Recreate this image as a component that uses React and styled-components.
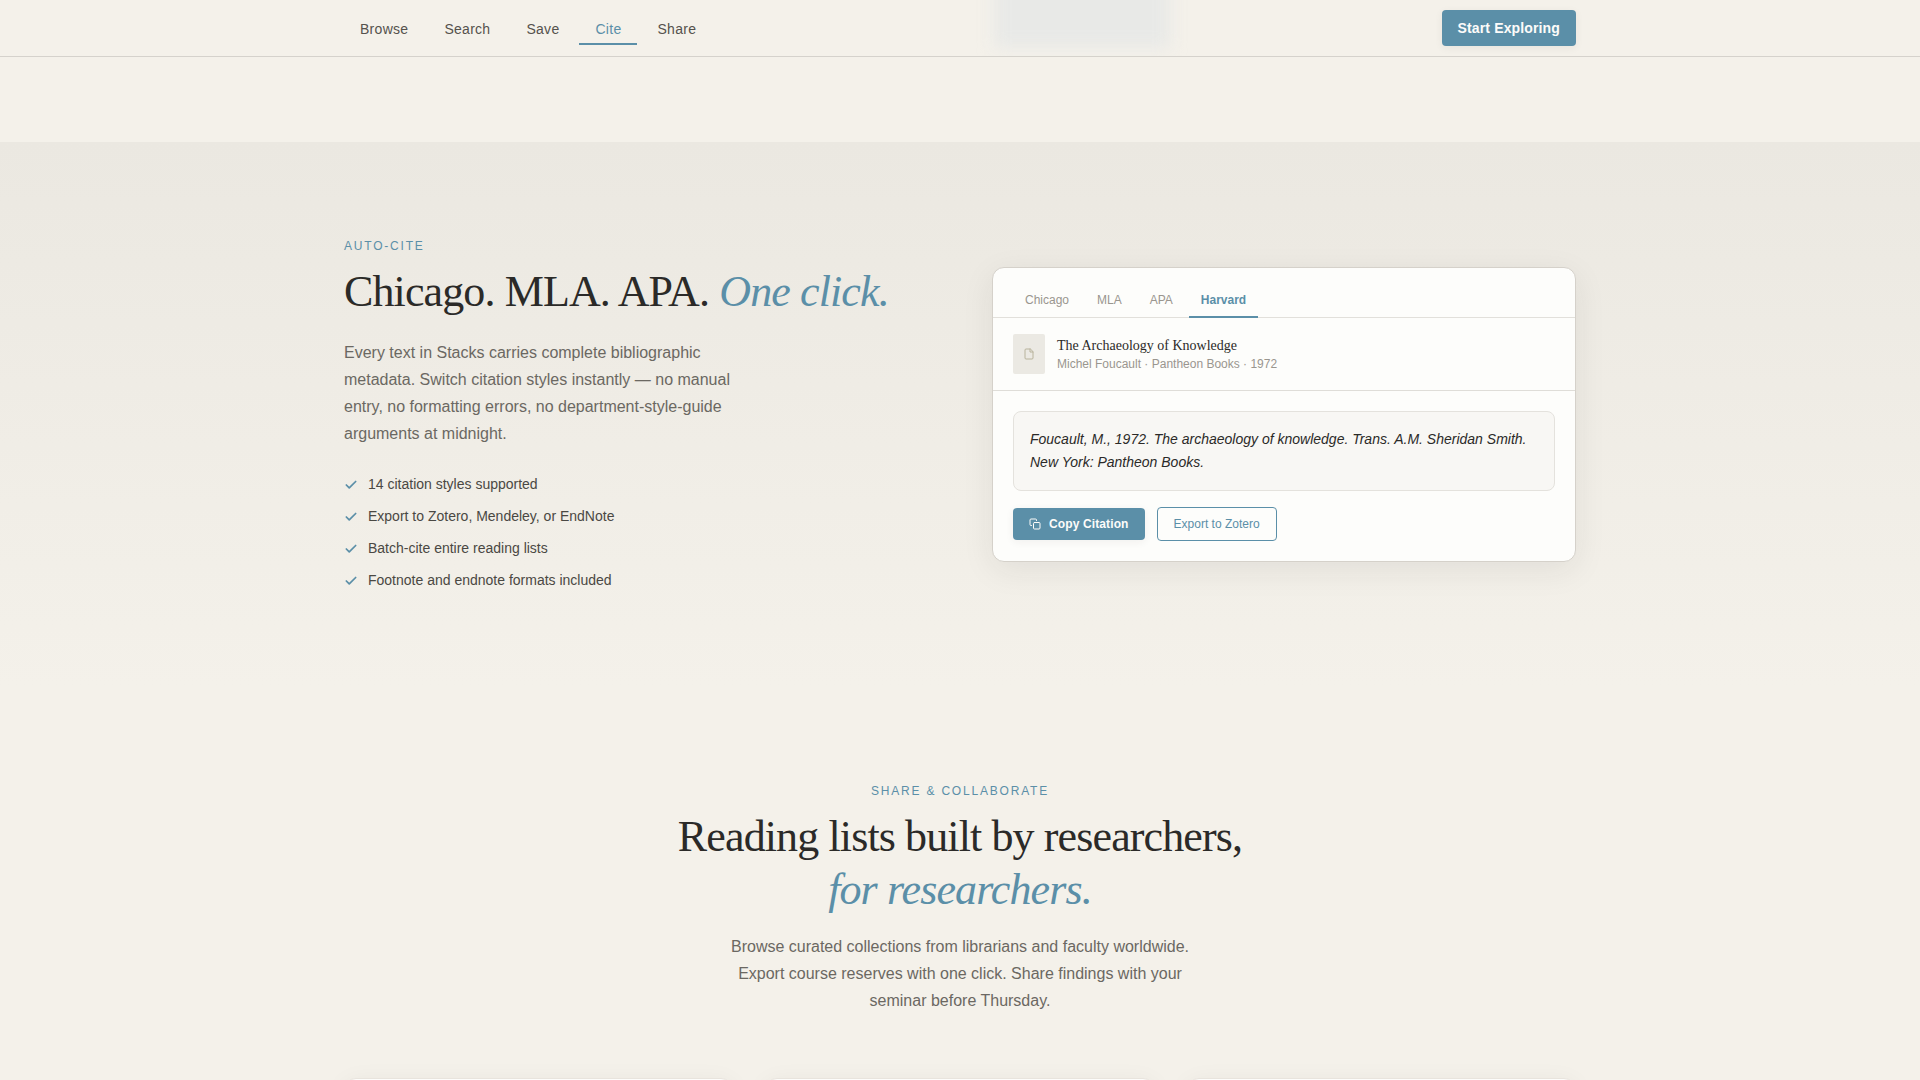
import React, { useState } from "react";
import styled, { createGlobalStyle } from "styled-components";

const sans = `"Liberation Sans", Arial, sans-serif`;
const serif = `"Liberation Serif", "Times New Roman", serif`;

const GlobalStyle = createGlobalStyle`
  *, *::before, *::after {
    box-sizing: border-box;
  }
  body {
    margin: 0;
    background: #f4f1ea;
    color: #2b2a28;
    font-family: ${sans};
  }
  h2, p, ul {
    margin: 0;
    padding: 0;
  }
  button {
    font-family: inherit;
    cursor: pointer;
  }
`;

const Container = styled.div`
  max-width: 1280px;
  margin: 0 auto;
  padding: 0 24px;
`;

const Header = styled.header`
  position: sticky;
  top: 0;
  z-index: 10;
  overflow: hidden;
  background: #f4f1ea;
  border-bottom: 1px solid #d5d2cc;
`;

/* blurred shape showing through the bar */
const HeaderGhost = styled.div`
  position: absolute;
  top: -40px;
  left: calc(50% + 34px);
  width: 176px;
  height: 88px;
  background: #e8e9e7;
  filter: blur(8px);
`;

const HeaderRow = styled(Container)`
  position: relative;
  display: flex;
  align-items: center;
  justify-content: space-between;
  height: 56px;
`;

const Nav = styled.nav`
  display: flex;
  gap: 4px;
`;

const NavLink = styled.a`
  padding: 8px 16px 4px;
  font-size: 14px;
  line-height: 20px;
  letter-spacing: 0.02em;
  text-decoration: none;
  color: ${(props) => (props.$active ? "#5b8fa8" : "#55524d")};
  border-bottom: 2px solid
    ${(props) => (props.$active ? "#5b8fa8" : "transparent")};
`;

const PrimaryButton = styled.button`
  display: flex;
  align-items: center;
  gap: 8px;
  border: 0;
  border-radius: 4px;
  background: #5b8fa8;
  color: #fdfcfa;
  font-weight: bold;
  letter-spacing: 0.01em;
  padding: 8px 16px;
  font-size: ${(props) => (props.$small ? "12px" : "14px")};
  line-height: ${(props) => (props.$small ? "16px" : "20px")};
  box-shadow: 0 2px 8px rgba(43, 42, 40, 0.06);
`;

const OutlineButton = styled.button`
  padding: 8px 16px;
  border: 1px solid #5b8fa8;
  border-radius: 4px;
  background: transparent;
  color: #5b8fa8;
  font-size: 12px;
  line-height: 16px;
`;

const CiteSection = styled.section`
  margin-top: 85px;
  padding: 96px 0;
  background: linear-gradient(to bottom, #ebe8e1, #f4f1ea);
`;

const CiteGrid = styled(Container)`
  display: grid;
  grid-template-columns: 1fr 1fr;
  gap: 64px;
  align-items: center;
`;

const Eyebrow = styled.p`
  margin-bottom: 11px;
  font-size: 12px;
  line-height: 16px;
  letter-spacing: 0.15em;
  text-transform: uppercase;
  color: #5b8fa8;
`;

const Heading = styled.h2`
  font-family: ${serif};
  font-size: 44px;
  line-height: 53px;
  font-weight: normal;
  letter-spacing: -0.02em;

  em {
    color: #5b8fa8;
  }
`;

const Lead = styled.p`
  max-width: 400px;
  margin-top: 21px;
  font-size: 16px;
  line-height: 27px;
  color: #6b6862;
`;

const Features = styled.ul`
  display: grid;
  gap: 11px;
  margin-top: 27px;
  list-style: none;
`;

const Feature = styled.li`
  display: flex;
  align-items: center;
  gap: 10px;
  font-size: 14px;
  line-height: 21px;
  color: #4a4843;
`;

const CitationCard = styled.div`
  border: 1px solid #d5d1ca;
  border-radius: 12px;
  background: #fdfdfb;
  box-shadow: 0 8px 32px rgba(43, 42, 40, 0.08);
`;

const TabList = styled.div`
  display: flex;
  gap: 4px;
  padding: 16px 20px 0;
  border-bottom: 1px solid #e2e0db;
`;

const Tab = styled.button`
  margin-bottom: -1px;
  padding: 8px 12px;
  border: 0;
  border-bottom: 2px solid
    ${(props) => (props.$active ? "#5b8fa8" : "transparent")};
  background: none;
  font-size: 12px;
  line-height: 16px;
  font-weight: ${(props) => (props.$active ? "bold" : "normal")};
  color: ${(props) => (props.$active ? "#5b8fa8" : "#9a968f")};
`;

const Source = styled.div`
  display: flex;
  align-items: center;
  gap: 12px;
  padding: 16px 20px;
  border-bottom: 1px solid #dfddd8;
`;

const Thumb = styled.div`
  display: flex;
  align-items: center;
  justify-content: center;
  width: 32px;
  height: 40px;
  border-radius: 2px;
  background: #ebe9e3;
`;

const SourceTitle = styled.p`
  font-family: ${serif};
  font-size: 14px;
  line-height: 20px;
`;

const SourceMeta = styled.p`
  font-size: 12px;
  line-height: 16px;
  color: #9a968f;
`;

const CardBody = styled.div`
  padding: 20px;
`;

const Quote = styled.p`
  && {
    padding: 16px;
  }
  border: 1px solid #e4e2dd;
  border-radius: 8px;
  background: #f8f7f4;
  font-size: 14px;
  line-height: 23px;
  font-style: italic;
`;

const Actions = styled.div`
  display: flex;
  align-items: center;
  gap: 12px;
  margin-top: 16px;
`;

const ShareSection = styled.section`
  padding: 96px 0;
`;

const ShareIntro = styled.div`
  text-align: center;

  ${Lead} {
    max-width: 480px;
    margin: 17px auto 0;
  }
`;

const ListGrid = styled.div`
  display: grid;
  grid-template-columns: repeat(3, 1fr);
  gap: 32px;
  margin-top: 64px;
`;

const ListCard = styled.div`
  min-height: 240px;
  border: 1px solid #e8e4dd;
  border-radius: 12px;
  background: #fdfdfb;
  box-shadow: 0 4px 24px rgba(43, 42, 40, 0.06);
`;

const CheckIcon = () => (
  <svg width="14" height="14" viewBox="0 0 24 24" fill="none" stroke="#5b8fa8"
    strokeWidth="3" strokeLinecap="round" strokeLinejoin="round">
    <polyline points="20 6 9 17 4 12" />
  </svg>
);

const FileIcon = () => (
  <svg width="12" height="12" viewBox="0 0 24 24" fill="none" stroke="#b8b39c"
    strokeWidth="2" strokeLinecap="round" strokeLinejoin="round">
    <path d="M14 2H6a2 2 0 0 0-2 2v16a2 2 0 0 0 2 2h12a2 2 0 0 0 2-2V8z" />
    <path d="M14 2v6h6" />
  </svg>
);

const CopyIcon = () => (
  <svg width="12" height="12" viewBox="0 0 24 24" fill="none"
    stroke="currentColor" strokeWidth="2" strokeLinecap="round"
    strokeLinejoin="round">
    <rect x="9" y="9" width="13" height="13" rx="2" />
    <path d="M5 15H4a2 2 0 0 1-2-2V4a2 2 0 0 1 2-2h9a2 2 0 0 1 2 2v1" />
  </svg>
);

const links = ["Browse", "Search", "Save", "Cite", "Share"];
const styles = ["Chicago", "MLA", "APA", "Harvard"];
const features = [
  "14 citation styles supported",
  "Export to Zotero, Mendeley, or EndNote",
  "Batch-cite entire reading lists",
  "Footnote and endnote formats included",
];

const App = () => {
  const [style, setStyle] = useState("Harvard");

  return (
    <>
      <GlobalStyle />
      <Header>
        <HeaderGhost />
        <HeaderRow>
          <Nav>
            {links.map((link) => (
              <NavLink
                key={link}
                href={`#${link.toLowerCase()}`}
                $active={link === "Cite"}
              >
                {link}
              </NavLink>
            ))}
          </Nav>
          <PrimaryButton>Start Exploring</PrimaryButton>
        </HeaderRow>
      </Header>

      <main>
        <CiteSection id="cite">
          <CiteGrid>
            <div>
              <Eyebrow>Auto-Cite</Eyebrow>
              <Heading>
                Chicago. MLA. APA. <em>One click.</em>
              </Heading>
              <Lead>
                Every text in Stacks carries complete bibliographic metadata.
                Switch citation styles instantly — no manual entry, no
                formatting errors, no department-style-guide arguments at
                midnight.
              </Lead>
              <Features>
                {features.map((feature) => (
                  <Feature key={feature}>
                    <CheckIcon />
                    {feature}
                  </Feature>
                ))}
              </Features>
            </div>

            <CitationCard>
              <TabList role="tablist">
                {styles.map((name) => (
                  <Tab
                    key={name}
                    role="tab"
                    aria-selected={style === name}
                    $active={style === name}
                    onClick={() => setStyle(name)}
                  >
                    {name}
                  </Tab>
                ))}
              </TabList>
              <Source>
                <Thumb>
                  <FileIcon />
                </Thumb>
                <div>
                  <SourceTitle>The Archaeology of Knowledge</SourceTitle>
                  <SourceMeta>
                    Michel Foucault · Pantheon Books · 1972
                  </SourceMeta>
                </div>
              </Source>
              <CardBody>
                <Quote>
                  Foucault, M., 1972. The archaeology of knowledge. Trans. A.M.
                  Sheridan Smith. New York: Pantheon Books.
                </Quote>
                <Actions>
                  <PrimaryButton $small>
                    <CopyIcon />
                    Copy Citation
                  </PrimaryButton>
                  <OutlineButton>Export to Zotero</OutlineButton>
                </Actions>
              </CardBody>
            </CitationCard>
          </CiteGrid>
        </CiteSection>

        <ShareSection id="share">
          <Container>
            <ShareIntro>
              <Eyebrow>Share &amp; Collaborate</Eyebrow>
              <Heading>
                Reading lists built by researchers,
                <br />
                <em>for researchers.</em>
              </Heading>
              <Lead>
                Browse curated collections from librarians and faculty
                worldwide. Export course reserves with one click. Share findings
                with your seminar before Thursday.
              </Lead>
            </ShareIntro>
            <ListGrid>
              <ListCard />
              <ListCard />
              <ListCard />
            </ListGrid>
          </Container>
        </ShareSection>
      </main>
    </>
  );
};

export default App;
